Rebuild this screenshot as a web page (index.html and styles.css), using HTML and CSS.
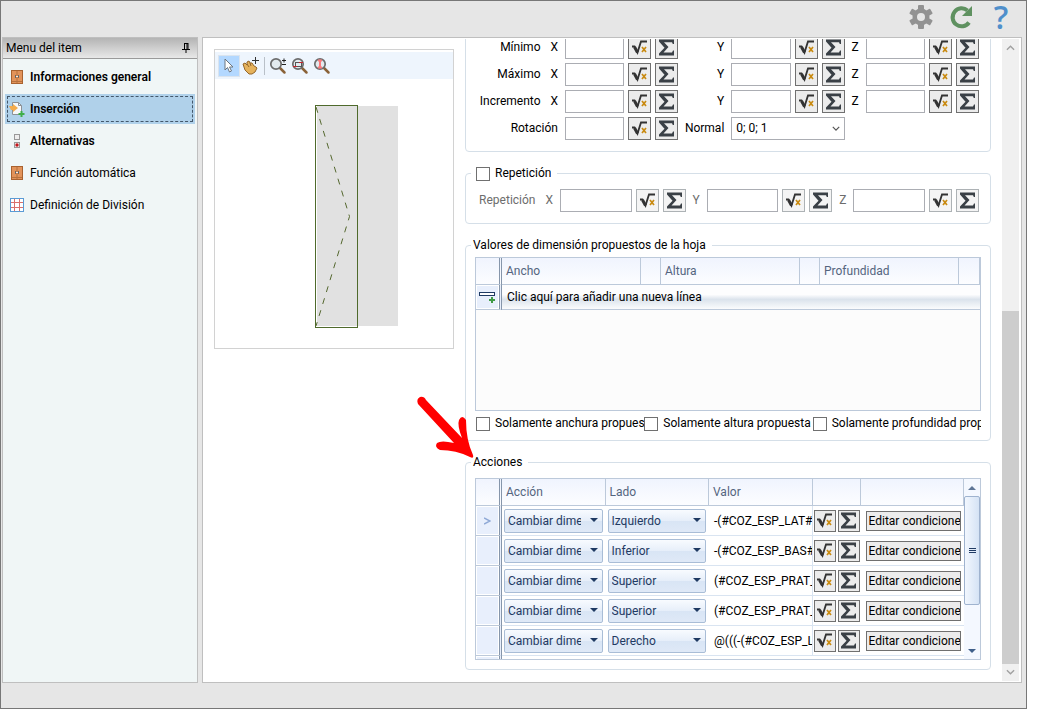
FILE: index.html
```html
<!DOCTYPE html>
<html lang="es">
<head>
  <meta charset="UTF-8">
  <meta name="viewport" content="width=device-width, initial-scale=1.0">
  <title>Inserción</title>
  <link rel="stylesheet" href="styles.css">
</head>
<body>
  <svg class="sprite" aria-hidden="true">
    <symbol id="root" viewBox="0 0 17 17">
      <path d="M1 7.500h2.500l3 6L10 2.500H16" fill="none" stroke="#333" stroke-width="1.800"/>
      <path d="M3.500 8l3 5.500" fill="none" stroke="#333" stroke-width="3"/>
      <path d="M11 8l4 5M15 8l-4 5" fill="none" stroke="#c98a10" stroke-width="1.700"/>
    </symbol>
    <symbol id="sum" viewBox="0 0 17 17">
      <path d="M1 .5h15V5h-1.200L14 3.200H6L10.500 8 5.500 13.500h8.500l1-2h1v5H1v-2L6.500 8.700 1 2.500z" fill="#3a4046"/>
    </symbol>
    <symbol id="wardrobe" viewBox="0 0 12 14">
      <rect x=".5" y=".5" width="11" height="13" fill="#e2935a" stroke="#a9622f"/>
      <path d="M6 1v12M1 11.500h10" stroke="#b5713d"/>
      <path d="M4.500 5v3M7.500 5v3" stroke="#666"/>
      <path d="M5 6.500h2" stroke="#eee"/>
    </symbol>
    <symbol id="lens" viewBox="0 0 18 18">
      <path d="M11 11l4.500 4.500" stroke="#8a6238" stroke-width="2.500" stroke-linecap="round"/>
      <circle cx="7" cy="7" r="5.200" fill="#e3eaee" stroke="#6c6c6c" stroke-width="1.700"/>
    </symbol>
    <symbol id="chevron" viewBox="0 0 10 6">
      <path d="M1 1l4 4 4-4" fill="none" stroke="currentColor" stroke-width="1.500"/>
    </symbol>
  </svg>

  <div class="window">
    <header class="topbar">
      <button class="top-btn" aria-label="Configuración">
        <svg width="24" height="24" viewBox="0 0 24 24">
          <g fill="#929292">
            <circle cx="12" cy="12" r="8.500"/>
            <rect x="9" y="0" width="6" height="24" rx="1"/>
            <rect x="9" y="0" width="6" height="24" rx="1" transform="rotate(60 12 12)"/>
            <rect x="9" y="0" width="6" height="24" rx="1" transform="rotate(120 12 12)"/>
          </g>
          <circle cx="12" cy="12" r="4" fill="#e6e6e6"/>
        </svg>
      </button>
      <button class="top-btn" aria-label="Actualizar">
        <svg width="24" height="24" viewBox="0 0 24 24">
          <path d="M18.500 5.500A9 9 0 1 0 20 17.500" fill="none" stroke="#5f9160" stroke-width="4"/>
          <path d="M23 1v10H13z" fill="#5f9160"/>
        </svg>
      </button>
      <button class="top-btn help" aria-label="Ayuda">?</button>
    </header>

    <div class="workspace">
      <aside class="sidebar">
        <div class="sidebar-title">
          <span>Menu del item</span>
          <svg width="8" height="10" viewBox="0 0 8 10"><path d="M2 .5h4M2.500 0v6M5 0v6M6 0v6M0 6.500h8M4 7v3" fill="none" stroke="#000"/></svg>
        </div>
        <nav class="menu">
          <a href="#" class="menu-item strong"><svg width="12" height="14"><use href="#wardrobe"/></svg>Informaciones general</a>
          <a href="#" class="menu-item strong selected">
            <svg width="16" height="16" viewBox="0 0 16 16">
              <path d="M3.500 1.500h6l3 3v9h-9z" fill="#f6f8fa" stroke="#8c9196"/>
              <path d="M9.500 1.500v3h3" fill="none" stroke="#8c9196"/>
              <path d="M0 5h4V3l5 4-5 4V9H2z" fill="#f3ac4d"/>
              <path d="M12.500 10v6M9.500 13h6" stroke="#3fae49" stroke-width="2"/>
            </svg>Inserción
          </a>
          <a href="#" class="menu-item strong">
            <svg width="8" height="14" viewBox="0 0 8 14">
              <rect x="1.500" y=".5" width="5" height="5" fill="#eee" stroke="#999"/>
              <rect x="1.500" y="8.500" width="5" height="5" fill="#eee" stroke="#999"/>
              <circle cx="4" cy="11" r="1.700" fill="#c4161c"/>
            </svg>Alternativas
          </a>
          <a href="#" class="menu-item"><svg width="12" height="14"><use href="#wardrobe"/></svg>Función automática</a>
          <a href="#" class="menu-item">
            <svg width="14" height="14" viewBox="0 0 14 14">
              <rect x=".5" y=".5" width="13" height="13" fill="#fff" stroke="#5b9bd5"/>
              <path d="M4.500 1v12M9.500 1v12M1 4.500h12M1 9.500h12" stroke="#d9706c"/>
            </svg>Definición de División
          </a>
        </nav>
      </aside>

      <main class="panel">
        <section class="viewer">
          <div class="viewer-tools">
            <button class="tool active" aria-label="Seleccionar">
              <svg width="16" height="16" viewBox="0 0 16 16"><path d="M4 1v11l2.500-2.500L8.500 14l2-1-2-4H12z" fill="#fff" stroke="#6d7680"/></svg>
            </button>
            <button class="tool" aria-label="Mover">
              <svg width="18" height="18" viewBox="0 0 18 18">
                <path d="M1 7l2-1 2 2 0-3 2-1 1 2 2 0 2 3 2 1 1 1-2 4-3 2H7L3 13z" fill="#e5b25c" stroke="#94662a"/>
                <path d="M5 7l2 3M8 6l1 3" stroke="#94662a"/>
                <path d="M13.500 0v7M10 3.500h7" stroke="#333"/>
              </svg>
            </button>
            <span class="tool-sep"></span>
            <button class="tool" aria-label="Zoom">
              <svg width="18" height="18" viewBox="0 0 18 18"><use href="#lens"/><path d="M13 3.500h4M15 1.500v4M13 7.500h4" stroke="#222"/></svg>
            </button>
            <button class="tool" aria-label="Zoom ventana">
              <svg width="18" height="18" viewBox="0 0 18 18"><use href="#lens"/><rect x="4.500" y="5.500" width="6" height="4" fill="none" stroke="#555"/><path d="M2 9.500h4M8 5.500h4" stroke="#c8232c"/></svg>
            </button>
            <button class="tool" aria-label="Zoom extensión">
              <svg width="18" height="18" viewBox="0 0 18 18"><use href="#lens"/><path d="M7 3v8M5 3.500h4M5 10.500h4" stroke="#fa7a7c" stroke-width="2"/></svg>
            </button>
          </div>
          <svg class="drawing" width="238" height="269" viewBox="0 0 238 269">
            <rect x="102" y="27" width="81" height="220" fill="#e1e1e1"/>
            <rect x="100.500" y="26.500" width="42" height="222" fill="none" stroke="#4f6a2c"/>
            <path d="M101 28L134.500 137.500L101 247" fill="none" stroke="#55682f" stroke-dasharray="6 6.500"/>
          </svg>
        </section>

        <form class="form">
          <fieldset class="group group-limits">
            <div class="vector-grid">
              <label for="minx">Mínimo <span class="axis">X</span></label>
              <input id="minx" type="text">
              <button type="button" class="sq" aria-label="Fórmula"><svg><use href="#root"/></svg></button>
              <button type="button" class="sq" aria-label="Suma"><svg><use href="#sum"/></svg></button>
              <label for="miny">Y</label>
              <input id="miny" type="text">
              <button type="button" class="sq" aria-label="Fórmula"><svg><use href="#root"/></svg></button>
              <button type="button" class="sq" aria-label="Suma"><svg><use href="#sum"/></svg></button>
              <label for="minz">Z</label>
              <input id="minz" type="text">
              <button type="button" class="sq" aria-label="Fórmula"><svg><use href="#root"/></svg></button>
              <button type="button" class="sq" aria-label="Suma"><svg><use href="#sum"/></svg></button>

              <label for="maxx">Máximo <span class="axis">X</span></label>
              <input id="maxx" type="text">
              <button type="button" class="sq" aria-label="Fórmula"><svg><use href="#root"/></svg></button>
              <button type="button" class="sq" aria-label="Suma"><svg><use href="#sum"/></svg></button>
              <label for="maxy">Y</label>
              <input id="maxy" type="text">
              <button type="button" class="sq" aria-label="Fórmula"><svg><use href="#root"/></svg></button>
              <button type="button" class="sq" aria-label="Suma"><svg><use href="#sum"/></svg></button>
              <label for="maxz">Z</label>
              <input id="maxz" type="text">
              <button type="button" class="sq" aria-label="Fórmula"><svg><use href="#root"/></svg></button>
              <button type="button" class="sq" aria-label="Suma"><svg><use href="#sum"/></svg></button>

              <label for="incx">Incremento <span class="axis">X</span></label>
              <input id="incx" type="text">
              <button type="button" class="sq" aria-label="Fórmula"><svg><use href="#root"/></svg></button>
              <button type="button" class="sq" aria-label="Suma"><svg><use href="#sum"/></svg></button>
              <label for="incy">Y</label>
              <input id="incy" type="text">
              <button type="button" class="sq" aria-label="Fórmula"><svg><use href="#root"/></svg></button>
              <button type="button" class="sq" aria-label="Suma"><svg><use href="#sum"/></svg></button>
              <label for="incz">Z</label>
              <input id="incz" type="text">
              <button type="button" class="sq" aria-label="Fórmula"><svg><use href="#root"/></svg></button>
              <button type="button" class="sq" aria-label="Suma"><svg><use href="#sum"/></svg></button>

              <label for="rot">Rotación</label>
              <input id="rot" type="text">
              <button type="button" class="sq" aria-label="Fórmula"><svg><use href="#root"/></svg></button>
              <button type="button" class="sq" aria-label="Suma"><svg><use href="#sum"/></svg></button>
              <label for="normal">Normal</label>
              <div class="picker">
                <select id="normal"><option>0; 0; 1</option></select>
                <svg width="8" height="5"><use href="#chevron"/></svg>
              </div>
            </div>
          </fieldset>

          <fieldset class="group group-repeat">
            <legend><label class="check"><input type="checkbox">Repetición</label></legend>
            <div class="repeat-grid">
              <label for="repx">Repetición <span class="axis">X</span></label>
              <input id="repx" type="text" disabled>
              <button type="button" class="sq" aria-label="Fórmula" disabled><svg><use href="#root"/></svg></button>
              <button type="button" class="sq" aria-label="Suma" disabled><svg><use href="#sum"/></svg></button>
              <label for="repy">Y</label>
              <input id="repy" type="text" disabled>
              <button type="button" class="sq" aria-label="Fórmula" disabled><svg><use href="#root"/></svg></button>
              <button type="button" class="sq" aria-label="Suma" disabled><svg><use href="#sum"/></svg></button>
              <label for="repz">Z</label>
              <input id="repz" type="text" disabled>
              <button type="button" class="sq" aria-label="Fórmula" disabled><svg><use href="#root"/></svg></button>
              <button type="button" class="sq" aria-label="Suma" disabled><svg><use href="#sum"/></svg></button>
            </div>
          </fieldset>

          <fieldset class="group group-sizes">
            <legend>Valores de dimensión propuestos de la hoja</legend>
            <div class="grid-box sizes-box">
              <table>
                <colgroup><col class="c-head"><col><col class="c-gap"><col><col class="c-gap"><col><col class="c-last"></colgroup>
                <thead>
                  <tr><th class="row-head"></th><th>Ancho</th><th></th><th>Altura</th><th></th><th>Profundidad</th><th></th></tr>
                </thead>
                <tbody>
                  <tr class="new-row">
                    <td class="row-head">
                      <svg width="17" height="12" viewBox="0 0 17 12"><rect x=".5" y="1.500" width="15" height="3" fill="#fff" stroke="#1f3a63"/><path d="M13 6v6M10 9h6" stroke="#3f9b45" stroke-width="2"/></svg>
                    </td>
                    <td colspan="6">Clic aquí para añadir una nueva línea</td>
                  </tr>
                </tbody>
              </table>
            </div>
            <div class="checks">
              <label class="check"><input type="checkbox">Solamente anchura propuesta</label>
              <label class="check"><input type="checkbox">Solamente altura propuesta</label>
              <label class="check"><input type="checkbox">Solamente profundidad propuesta</label>
            </div>
          </fieldset>

          <fieldset class="group group-actions">
            <legend>Acciones</legend>
            <div class="grid-box actions-box">
              <table>
                <colgroup><col class="c-head"><col><col><col><col class="c-formula"><col></colgroup>
                <thead>
                  <tr><th class="row-head"></th><th>Acción</th><th>Lado</th><th>Valor</th><th></th><th></th></tr>
                </thead>
                <tbody>
                  <tr>
                    <td class="row-head"><svg class="current" width="7" height="8" viewBox="0 0 7 8"><path d="M0 1l6 3-6 3" fill="none" stroke="#8fa9d6" stroke-width="1.500"/></svg></td>
                    <td><div class="combo"><select aria-label="Acción"><option>Cambiar dimensión</option></select></div></td>
                    <td><div class="combo"><select aria-label="Lado"><option>Izquierdo</option></select></div></td>
                    <td class="value">-(#COZ_ESP_LAT#-</td>
                    <td class="formula"><button type="button" class="sq" aria-label="Fórmula"><svg><use href="#root"/></svg></button><button type="button" class="sq" aria-label="Suma"><svg><use href="#sum"/></svg></button></td>
                    <td><button type="button" class="edit">Editar condiciones</button></td>
                  </tr>
                  <tr>
                    <td class="row-head"></td>
                    <td><div class="combo"><select aria-label="Acción"><option>Cambiar dimensión</option></select></div></td>
                    <td><div class="combo"><select aria-label="Lado"><option>Inferior</option></select></div></td>
                    <td class="value">-(#COZ_ESP_BAS#</td>
                    <td class="formula"><button type="button" class="sq" aria-label="Fórmula"><svg><use href="#root"/></svg></button><button type="button" class="sq" aria-label="Suma"><svg><use href="#sum"/></svg></button></td>
                    <td><button type="button" class="edit">Editar condiciones</button></td>
                  </tr>
                  <tr>
                    <td class="row-head"></td>
                    <td><div class="combo"><select aria-label="Acción"><option>Cambiar dimensión</option></select></div></td>
                    <td><div class="combo"><select aria-label="Lado"><option>Superior</option></select></div></td>
                    <td class="value">(#COZ_ESP_PRAT_I</td>
                    <td class="formula"><button type="button" class="sq" aria-label="Fórmula"><svg><use href="#root"/></svg></button><button type="button" class="sq" aria-label="Suma"><svg><use href="#sum"/></svg></button></td>
                    <td><button type="button" class="edit">Editar condiciones</button></td>
                  </tr>
                  <tr>
                    <td class="row-head"></td>
                    <td><div class="combo"><select aria-label="Acción"><option>Cambiar dimensión</option></select></div></td>
                    <td><div class="combo"><select aria-label="Lado"><option>Superior</option></select></div></td>
                    <td class="value">(#COZ_ESP_PRAT_I</td>
                    <td class="formula"><button type="button" class="sq" aria-label="Fórmula"><svg><use href="#root"/></svg></button><button type="button" class="sq" aria-label="Suma"><svg><use href="#sum"/></svg></button></td>
                    <td><button type="button" class="edit">Editar condiciones</button></td>
                  </tr>
                  <tr>
                    <td class="row-head"></td>
                    <td><div class="combo"><select aria-label="Acción"><option>Cambiar dimensión</option></select></div></td>
                    <td><div class="combo"><select aria-label="Lado"><option>Derecho</option></select></div></td>
                    <td class="value">@(((-(#COZ_ESP_L</td>
                    <td class="formula"><button type="button" class="sq" aria-label="Fórmula"><svg><use href="#root"/></svg></button><button type="button" class="sq" aria-label="Suma"><svg><use href="#sum"/></svg></button></td>
                    <td><button type="button" class="edit">Editar condiciones</button></td>
                  </tr>
                  <tr><td class="row-head"></td><td></td><td></td><td></td><td></td><td></td></tr>
                </tbody>
              </table>
              <div class="inner-scroll">
                <span class="tri up"></span>
                <div class="inner-thumb"><i></i><i></i><i></i></div>
                <span class="tri down"></span>
              </div>
            </div>
          </fieldset>
        </form>

        <div class="scrollbar">
          <svg class="scroll-up" width="9" height="6"><use href="#chevron"/></svg>
          <div class="scroll-track"><div class="scroll-thumb"></div></div>
          <svg width="9" height="6"><use href="#chevron"/></svg>
        </div>

        <svg class="pointer" width="58" height="64" viewBox="0 0 58 64">
          <path d="M4 1Q8 0 10 4L46 42Q41 29 43 24Q46 18 50 24Q50 44 57 59Q58 63 54 61Q40 54 24 54Q18 51 21 47Q25 44 38 47L2 8Q0 3 4 1z" fill="#f00"/>
        </svg>
      </main>
    </div>
  </div>
</body>
</html>
```

FILE: styles.css
```css
:root {
  --chrome: #e6e6e6;
  --group-line: #d5dfe8;
  --grid-line: #bcc9da;
  --row-head: #e8effc;
}

* {
  box-sizing: border-box;
}

body {
  margin: 0;
  height: 100vh;
  padding: 0 13px 16px 0;
  background: #fff;
  color: #000;
  font-family: Roboto, "Open Sans", sans-serif;
  font-size: 12px;
  line-height: 17px;
}

button,
input,
select {
  margin: 0;
  padding: 0;
  font: inherit;
  color: inherit;
  border-radius: 0;
}

svg {
  display: block;
  flex: none;
}

.sprite {
  position: absolute;
  width: 0;
  height: 0;
}

.window {
  display: flex;
  flex-direction: column;
  height: 100%;
  padding-bottom: 25px;
  border: 1px solid #777;
  background: var(--chrome);
}

.topbar {
  display: flex;
  justify-content: flex-end;
  align-items: center;
  gap: 14px;
  height: 36px;
  padding: 0 12px 4px 0;
  flex: none;
}

.top-btn {
  display: flex;
  align-items: center;
  justify-content: center;
  width: 26px;
  height: 32px;
  border: 0;
  background: none;
}

.help {
  color: #4f8fcb;
  font-family: "Open Sans", sans-serif;
  font-size: 32px;
  font-weight: 600;
  line-height: 32px;
}

.workspace {
  display: flex;
  gap: 4px;
  flex: 1;
  min-height: 0;
  padding: 0 4px 0 1px;
}

/* left menu */
.sidebar {
  width: 196px;
  flex: none;
  border: 1px solid #bfbfbf;
  background: #f0f6f6;
}

.sidebar-title {
  display: flex;
  align-items: center;
  justify-content: space-between;
  height: 21px;
  padding: 0 7px 0 3px;
  border-bottom: 1px solid #9a9a9a;
  background: linear-gradient(#b4b4b4, #e8e8e8);
}

.menu {
  display: flex;
  flex-direction: column;
  gap: 2px;
  padding: 3px 2px;
}

.menu-item {
  display: grid;
  grid-template-columns: 20px 1fr;
  align-items: center;
  gap: 3px;
  height: 30px;
  padding-left: 2px;
  color: #000;
  text-decoration: none;
}

.menu-item svg {
  justify-self: center;
}

.strong {
  font-weight: 600;
}

.selected {
  background: #b0d1ea;
  outline: 1px dashed #44586b;
  outline-offset: -3px;
}

/* main panel */
.panel {
  position: relative;
  display: flex;
  gap: 11px;
  flex: 1;
  min-width: 0;
  padding: 1px 2px 1px 11px;
  border: 1px solid #bfbfbf;
  background: #fff;
}

.viewer {
  align-self: flex-start;
  width: 240px;
  flex: none;
  margin-top: 10px;
  padding-top: 2px;
  border: 1px solid #d2d2d2;
}

.viewer-tools {
  display: flex;
  align-items: center;
  height: 27px;
  padding-left: 3px;
  background: #eef5fd;
}

.tool {
  display: flex;
  align-items: center;
  justify-content: center;
  width: 22px;
  height: 22px;
  border: 0;
  background: none;
}

.tool.active {
  border: 1px solid #dbe4ee;
  background: #b3d8ff;
}

.tool-sep {
  width: 1px;
  height: 18px;
  margin: 0 2px;
  background: #b9c0c8;
}

.form {
  display: flex;
  flex-direction: column;
  justify-content: flex-end;
  gap: 13px;
  flex: 1;
  min-width: 0;
  padding-bottom: 11px;
  overflow: hidden;
}

.group {
  flex: none;
  min-width: 0;
  margin: 0;
  padding: 3px 9px 9px;
  border: 1px solid var(--group-line);
  border-radius: 4px;
}

.group legend {
  height: 17px;
  margin-left: -4px;
  padding: 0 6px 0 2px;
}

.group-limits {
  padding: 3px 11px 11px 0;
}

.group-repeat {
  padding: 7px 11px 11px 0;
}

.group-repeat legend {
  margin-left: 5px;
  padding-left: 5px;
}

.group-actions {
  padding: 7px 9px 9px;
}

.vector-grid,
.repeat-grid {
  display: grid;
  grid-template-columns: 95px 1fr 23px 23px 45px 1fr 23px 23px 13px 1fr 23px 23px;
  gap: 4px;
}

.repeat-grid {
  grid-template-columns: 90px 1fr 23px 23px 13px 1fr 23px 23px 13px 1fr 23px 23px;
  color: #6d6d6d;
}

.vector-grid > label,
.repeat-grid > label {
  align-self: center;
  padding-right: 3px;
  text-align: right;
  white-space: nowrap;
}

.axis {
  margin-left: 7px;
}

.vector-grid input,
.repeat-grid input {
  width: 100%;
  height: 23px;
  border: 1px solid #abadb3;
  background: #fff;
}

.sq {
  display: flex;
  align-items: center;
  justify-content: center;
  width: 23px;
  height: 23px;
  border: 1px solid #707070;
  background: #ececec;
}

.sq svg {
  width: 17px;
  height: 17px;
}

.sq:disabled {
  border-color: #adb2b5;
  background: #f4f4f4;
}

.picker {
  position: relative;
  grid-column: span 3;
}

.picker select {
  width: 100%;
  height: 23px;
  padding-left: 4px;
  border: 1px solid #abadb3;
  background: #fff;
  appearance: none;
}

.picker svg {
  position: absolute;
  top: 9px;
  right: 5px;
  color: #555;
}

.check {
  display: flex;
  align-items: center;
  gap: 5px;
  white-space: nowrap;
  overflow: hidden;
}

.check input {
  width: 14px;
  height: 14px;
  flex: none;
  border: 1px solid #707070;
  background: #fff;
  appearance: none;
}

.checks {
  display: grid;
  grid-template-columns: repeat(3, minmax(0, 1fr));
  height: 14px;
  margin-top: 6px;
  padding-left: 1px;
}

.checks .check {
  height: 17px;
  margin-top: -2px;
}

/* data grids */
.grid-box {
  display: flex;
  border: 1px solid var(--grid-line);
  overflow: hidden;
}

.sizes-box {
  height: 154px;
  background: #fcfcfc;
}

.actions-box {
  height: 182px;
}

table {
  flex: 1;
  width: 100%;
  min-width: 0;
  align-self: flex-start;
  border-collapse: separate;
  border-spacing: 0;
  table-layout: fixed;
}

.c-head {
  width: 26px;
}

.c-gap {
  width: 20px;
}

.c-last {
  width: 21px;
}

.c-formula {
  width: 48px;
}

th {
  height: 27px;
  padding: 0 4px;
  border-right: 1px solid var(--grid-line);
  border-bottom: 1px solid var(--grid-line);
  background: linear-gradient(#f0f4fe, #fcfdff);
  color: #54657e;
  font-weight: normal;
  text-align: left;
}

td {
  height: 30px;
  padding: 0 3px 0 2px;
  border-bottom: 1px solid #d9e4f1;
}

.row-head {
  padding: 0;
  border-right: 3px double #8696ab;
  border-bottom-color: var(--grid-line);
}

td.row-head {
  background: var(--row-head);
  box-shadow: inset 0 0 0 1px #fff;
}

.row-head svg {
  margin: 0 auto;
}

.new-row td {
  height: 25px;
  padding-left: 5px;
  border-bottom-color: var(--grid-line);
}

.new-row td:last-child {
  background: linear-gradient(#fdfdfe 40%, #dbe3ec 60%, #fbfcfd);
}

.new-row .row-head {
  padding-left: 0;
}

.combo {
  position: relative;
}

.combo::after {
  content: "";
  position: absolute;
  top: 9px;
  right: 5px;
  border: 4px solid transparent;
  border-top-color: #1f3a63;
  border-bottom: 0;
}

.combo select {
  display: block;
  width: 100%;
  height: 24px;
  padding: 1px 21px 0 3px;
  border: 1px solid #a9bdd6;
  border-radius: 2px;
  background: linear-gradient(#f8fbff, #e6eef9 50%, #d9e5f5 51%, #dfe9f7);
  color: #1f3a63;
  appearance: none;
}

td.value {
  padding: 1px 0 0 5px;
  border-right: 1px solid #d9e4f1;
  white-space: nowrap;
  overflow: hidden;
}

td.formula {
  padding: 0 0 0 1px;
}

.formula .sq {
  display: inline-flex;
  width: 22px;
  height: 22px;
  vertical-align: middle;
}

.formula .sq + .sq {
  margin-left: 2px;
}

.edit {
  display: block;
  width: calc(100% - 3px);
  height: 20px;
  margin-left: 3px;
  padding-left: 2px;
  border: 1px solid #707070;
  background: #ececec;
  text-align: left;
  line-height: 18px;
  white-space: nowrap;
  overflow: hidden;
}

.inner-scroll {
  display: flex;
  flex-direction: column;
  align-items: center;
  width: 16px;
  flex: none;
  background: #f4f8ff;
}

.inner-thumb {
  display: flex;
  flex-direction: column;
  align-items: center;
  justify-content: center;
  gap: 1px;
  width: 16px;
  height: 109px;
  border: 1px solid #9fb3cf;
  border-radius: 2px;
  background: linear-gradient(90deg, #f2f7fe, #d5e3f5);
}

.inner-thumb i {
  width: 7px;
  height: 1px;
  background: #1f3a63;
}

.tri {
  border: 4px solid transparent;
}

.tri.up {
  margin: 3px 0 6px;
  border-bottom-color: #5f7696;
}

.tri.down {
  margin-top: auto;
  margin-bottom: 6px;
  border-top-color: #3f5f8a;
  border-bottom: 0;
}

/* arrow that points at the actions group */
.pointer {
  position: absolute;
  left: 213px;
  bottom: 222px;
}

.scrollbar {
  display: flex;
  flex-direction: column;
  align-items: center;
  width: 17px;
  flex: none;
  padding: 6px 0;
  background: #f0f0f0;
  color: #a0a0a0;
}

.scroll-up {
  transform: rotate(180deg);
}

.scroll-track {
  display: flex;
  flex-direction: column;
  justify-content: flex-end;
  flex: 1;
  width: 17px;
  padding: 5px 0;
}

.scroll-thumb {
  height: 58%;
  background: #cdcdcd;
}
```
